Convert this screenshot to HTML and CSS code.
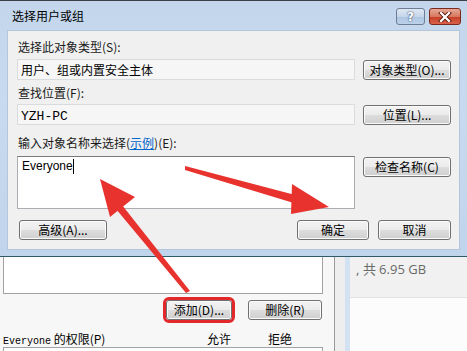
FILE: index.html
```html
<!DOCTYPE html>
<html lang="zh-CN">
<head>
    <meta charset="UTF-8">
    <title>选择用户或组</title>
    <link rel="stylesheet" href="styles.css">
</head>
<body>
    <div class="screen">
        <div class="dialog">
            <div class="titlebar">
                <span class="title">选择用户或组</span>
                <div class="caption">
                    <span class="cap-btn help">?</span>
                    <span class="cap-btn close">
                        <svg width="14" height="10" viewBox="0 0 14 10">
                            <path d="M3 1 L11 9 M11 1 L3 9" stroke="#5a1a10" stroke-width="4" stroke-linecap="square"/>
                            <path d="M3 1 L11 9 M11 1 L3 9" stroke="#ffffff" stroke-width="2.2" stroke-linecap="square"/>
                        </svg>
                    </span>
                </div>
            </div>

            <div class="client">
                <div class="label">选择此对象类型(S):</div>
                <div class="box readonly first">用户、组或内置安全主体</div>
                <button class="btn side-btn first">对象类型(O)...</button>

                <div class="label gap6">查找位置(F):</div>
                <div class="box readonly second"><span class="mono">YZH-PC</span></div>
                <button class="btn side-btn second">位置(L)...</button>

                <div class="label gap11">输入对象名称来选择(<a href="#" class="link">示例</a>)(E):</div>
                <div class="box entry"><span class="typed">Everyone</span><span class="caret"></span></div>
                <button class="btn side-btn third">检查名称(C)</button>

                <div class="footer-row">
                    <button class="btn wide">高级(A)...</button>
                    <div class="ok-cancel">
                        <button class="btn ok">确定</button>
                        <button class="btn cancel">取消</button>
                    </div>
                </div>
            </div>
        </div>

        <div class="behind">
            <div class="perm">
                <div class="listbox"></div>
                <div class="perm-buttons">
                    <button class="btn add">添加(D)...</button>
                    <button class="btn remove">删除(R)</button>
                </div>
                <div class="perm-head">
                    <span class="perm-name"><span class="mono small">Everyone</span> 的权限(P)</span>
                    <span class="allow">允许</span>
                    <span class="deny">拒绝</span>
                </div>
                <div class="perm-list"></div>
            </div>
            <div class="strip-grey"></div>
            <div class="strip-blue"></div>
            <div class="explorer">
                <div class="info-row">, 共 6.95 GB</div>
            </div>
        </div>

        <!-- red annotation arrows drawn on top of the screenshot -->
        <svg class="arrows" width="467" height="351" viewBox="0 0 467 351">
            <polygon fill="#e8322e" points="186,293 190,291 122,205 116,209"/>
            <polygon fill="#e8322e" points="100,179 110,217 135,197"/>
            <polygon fill="#e8322e" points="185,166 185,170 297,204 299,196"/>
            <polygon fill="#e8322e" points="329,207 292,184 291,214"/>
        </svg>
    </div>
</body>
</html>
```

FILE: styles.css
```css
body {
    margin: 0;
    background: #f5f5f5;
    font-family: "Noto Sans CJK SC", sans-serif;
    font-size: 12px;
    color: #000;
}
.screen {
    position: relative;
    width: 467px;
    height: 351px;
    overflow: hidden;
}
.dialog {
    width: 467px;
    box-sizing: border-box;
    padding: 0 7px 6px 7px;
    border-top: 1px solid #3b4048;
    border-bottom: 1px solid #2f5a68;
    background: linear-gradient(to bottom, #c3d6ec, #c8daef 40%, #c0d4eb);
}
.titlebar {
    height: 29px;
    margin: 0 -7px;
    padding-left: 12px;
    display: flex;
    align-items: center;
    justify-content: space-between;
}
.title {
    line-height: 14px;
    margin-top: 1px;
}
.caption {
    display: flex;
    gap: 4px;
    margin-right: 6px;
    margin-top: 2px;
}
.cap-btn {
    height: 15px;
    border: 1px solid #6d7d93;
    border-radius: 3px;
    display: flex;
    align-items: center;
    justify-content: center;
}
.help {
    width: 27px;
    background: linear-gradient(to bottom, #dfe8f3, #c6d6ea 50%, #aec5e1 51%, #bcd1ea);
    color: #ffffff;
    font-family: "DejaVu Sans", sans-serif;
    font-weight: bold;
    font-size: 12px;
    line-height: 14px;
    text-shadow: 0 0 2px #3e5576, 0 0 1px #3e5576;
}
.close {
    width: 30px;
    border-color: #7a2a1c;
    background: linear-gradient(to bottom, #e6a797, #d8785f 50%, #c43d23 51%, #d8624a);
}
.client {
    background: #f0f0f0;
    border: 1px solid #b4c6dc;
    padding: 9px 8px 9px 9px;
    display: grid;
    grid-template-columns: 338px 88px;
    column-gap: 8px;
}
.label {
    grid-column: 1;
    height: 14px;
    line-height: 14px;
    padding-left: 1px;
    color: #1a1a1a;
}
.gap6 {
    margin-top: 6px;
}
.gap11 {
    margin-top: 11px;
}
.label + .box {
    grid-column: 1;
}
.box {
    box-sizing: border-box;
    padding-left: 3px;
}
.readonly {
    height: 21px;
    line-height: 19px;
    background: #f6f6f6;
    border: 1px solid #d9dcdf;
}
.readonly.first {
    margin-top: 5px;
}
.readonly.second {
    margin-top: 4px;
}
.mono {
    font-family: "Liberation Mono", monospace;
    font-size: 13px;
}
.mono.small {
    font-size: 10px;
}
.entry {
    margin-top: 6px;
    height: 53px;
    background: #ffffff;
    border: 1px solid #abadb3;
    border-top-color: #7a7a7a;
    padding: 2px 0 0 4px;
    display: flex;
    align-items: flex-start;
}
.typed {
    font-family: "Liberation Sans", sans-serif;
    font-size: 12px;
    line-height: 15px;
}
.caret {
    width: 1px;
    height: 15px;
    background: #000;
}
.link {
    color: #0066cc;
    text-decoration: underline;
}
.btn {
    box-sizing: border-box;
    height: 20px;
    padding: 0;
    border: 1px solid #707070;
    border-radius: 3px;
    background: linear-gradient(to bottom, #f3f3f3, #ebebeb 50%, #dddddd 51%, #cfcfcf);
    box-shadow: inset 0 0 0 1px #fbfbfb;
    font-family: "Noto Sans CJK SC", sans-serif;
    font-size: 12px;
    line-height: 16px;
    color: #000;
}
.side-btn {
    grid-column: 2;
    width: 88px;
    align-self: center;
}
.side-btn.first {
    grid-row: 2;
    margin-top: 5px;
}
.side-btn.second {
    grid-row: 4;
    margin-top: 4px;
}
.side-btn.third {
    grid-row: 6;
    align-self: start;
    margin-top: 7px;
}
.footer-row {
    grid-column: 1 / -1;
    margin-top: 11px;
    display: flex;
    justify-content: space-between;
}
.wide {
    width: 88px;
    margin-left: 2px;
}
.ok-cancel {
    display: flex;
    gap: 9px;
}
.ok {
    width: 72px;
}
.cancel {
    width: 73px;
}
.behind {
    display: flex;
    height: 94px;
}
.perm {
    width: 335px;
    box-sizing: border-box;
    border-right: 1px solid #9a9a9a;
    padding-left: 3px;
    background: #f7f7f7;
}
.listbox {
    width: 320px;
    box-sizing: border-box;
    height: 37px;
    border: 1px solid #a2a2a2;
    border-top: none;
    background: #ffffff;
}
.perm-buttons {
    display: flex;
    margin-top: 6px;
    padding-left: 163px;
    gap: 16px;
}
.add {
    width: 66px;
    outline: 3px solid #e3282c;
    outline-offset: 0;
}
.remove {
    width: 74px;
}
.perm-head {
    display: flex;
    margin-top: 12px;
    height: 14px;
    line-height: 14px;
}
.perm-name {
    width: 204px;
}
.allow {
    width: 61px;
}
.perm-list {
    margin-top: 1px;
    width: 320px;
    height: 10px;
    box-sizing: border-box;
    border: 1px solid #a2a2a2;
    background: #ffffff;
}
.strip-grey {
    width: 10px;
    background: #eeeeee;
}
.strip-blue {
    width: 5px;
    background: #d3e2f3;
}
.explorer {
    flex: 1;
    background: #fcfcfc;
}
.info-row {
    height: 41px;
    box-sizing: border-box;
    border-bottom: 1px solid #e2e2e2;
    background: #f1f1f1;
    padding: 4px 0 0 6px;
    font-family: "Open Sans", sans-serif;
    font-size: 13px;
    line-height: 17px;
    color: #6a6a6a;
}
.arrows {
    position: absolute;
    left: 0;
    top: 0;
    pointer-events: none;
}
```
